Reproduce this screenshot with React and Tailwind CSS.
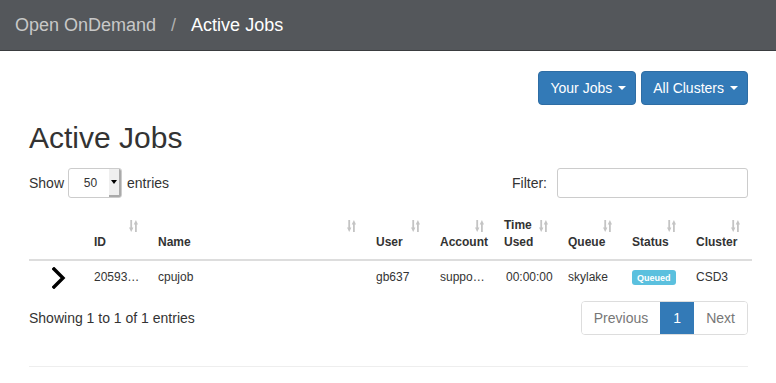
import React from "react";

function SortIcon() {
  return (
    <svg width="9" height="12" viewBox="0 0 9 12" className="absolute right-[12px] top-[11px]" fill="#c4c4c4">
      <rect x="1.3" y="0" width="1.8" height="9" />
      <polygon points="0,7.5 4.4,7.5 2.2,12" />
      <rect x="6" y="3" width="1.8" height="9" />
      <polygon points="4.7,4.5 9,4.5 6.9,0" />
    </svg>
  );
}

function Th({ children, className = "" }) {
  return (
    <th className={"relative align-bottom text-left font-bold px-[8px] pb-[8px] pt-[8px] leading-[17px] border-b-2 border-[#ddd] " + className}>
      {children}
      <SortIcon />
    </th>
  );
}

function Caret() {
  return (
    <span className="inline-block ml-[6px] align-middle w-0 h-0 border-t-[4px] border-t-white border-x-[4px] border-x-transparent" />
  );
}

export default function App() {
  return (
    <div className="w-[776px] h-[383px] bg-white text-[#333] text-[14px] leading-[20px] overflow-hidden" style={{ fontFamily: '"Liberation Sans", Arial, sans-serif' }}>
      <div className="h-[51px] bg-[#54575b] border-b border-[#3a3c3f] flex items-center pl-[15px] text-[18px]">
        <span className="text-[#c8c8c8]">Open OnDemand</span>
        <span className="text-[#b0b0b0] px-[15px]">/</span>
        <span className="text-white">Active Jobs</span>
      </div>
      <div className="px-[29px] pr-[28px]">
        <div className="flex justify-end gap-[5px] mt-[20px]">
          <button className="h-[34px] pl-[11px] pr-[9px] rounded-[4px] bg-[#337ab7] border border-[#2e6da4] text-white text-[14px] flex items-center">
            Your Jobs<Caret />
          </button>
          <button className="h-[34px] pl-[11px] pr-[9px] rounded-[4px] bg-[#337ab7] border border-[#2e6da4] text-white text-[14px] flex items-center">
            All Clusters<Caret />
          </button>
        </div>
        <h2 className="text-[30px] leading-[33px] mt-[16px] mb-[14px] font-normal">Active Jobs</h2>
        <div className="flex justify-between items-center h-[30px]">
          <div className="flex items-center">
            <span>Show</span>
            <div className="ml-[4px] mr-[5px] w-[54px] h-[30px] border border-[#ccc] rounded-[3px] flex items-stretch overflow-hidden">
              <span className="flex-1 flex items-center justify-center text-[12px] pl-[3px]">50</span>
              <span className="w-[12px] bg-[#efefef] border-r-2 border-b-2 border-[#aaa] flex items-center justify-center">
                <span className="w-0 h-0 border-t-[4px] border-t-black border-x-[3px] border-x-transparent" />
              </span>
            </div>
            <span>entries</span>
          </div>
          <div className="flex items-center">
            <span>Filter:</span>
            <div className="ml-[10px] w-[191px] h-[30px] border border-[#ccc] rounded-[3px]" />
          </div>
        </div>
        <table className="mt-[11px] w-[723px] table-fixed border-collapse text-[12px]">
          <colgroup>
            <col className="w-[57px]" />
            <col className="w-[64px]" />
            <col className="w-[218px]" />
            <col className="w-[64px]" />
            <col className="w-[64px]" />
            <col className="w-[64px]" />
            <col className="w-[64px]" />
            <col className="w-[64px]" />
            <col className="w-[64px]" />
          </colgroup>
          <thead>
            <tr>
              <th className="border-b-2 border-[#ddd]" />
              <Th>ID</Th>
              <Th>Name</Th>
              <Th>User</Th>
              <Th>Account</Th>
              <Th>Time<br />Used</Th>
              <Th>Queue</Th>
              <Th>Status</Th>
              <Th>Cluster</Th>
            </tr>
          </thead>
          <tbody>
            <tr className="h-[32px]">
              <td className="pl-[23px] pt-[2px]">
                <svg width="14" height="22" viewBox="0 0 14 22" className="block">
                  <polyline points="2,2 11,11 2,20" fill="none" stroke="#000" strokeWidth="3.4" strokeLinecap="square" />
                </svg>
              </td>
              <td className="px-[8px]">20593…</td>
              <td className="px-[8px]">cpujob</td>
              <td className="px-[8px]">gb637</td>
              <td className="px-[8px]">suppo…</td>
              <td className="px-[8px] pl-[10px]">00:00:00</td>
              <td className="px-[8px]">skylake</td>
              <td className="px-[8px]">
                <span className="inline-flex items-center h-[15px] px-[5px] rounded-[3px] bg-[#5bc0de] text-white font-bold text-[9px]">Queued</span>
              </td>
              <td className="px-[8px]">CSD3</td>
            </tr>
          </tbody>
        </table>
        <div className="flex justify-between items-center mt-[9px]">
          <span>Showing 1 to 1 of 1 entries</span>
          <div className="flex h-[34px] border border-[#ddd] rounded-[4px] overflow-hidden">
            <span className="px-[12px] flex items-center text-[#777] bg-white">Previous</span>
            <span className="w-[34px] flex items-center justify-center bg-[#337ab7] text-white">1</span>
            <span className="px-[12px] flex items-center text-[#777] bg-white">Next</span>
          </div>
        </div>
        <div className="mt-[31px] border-t border-[#eee]" />
      </div>
    </div>
  );
}
